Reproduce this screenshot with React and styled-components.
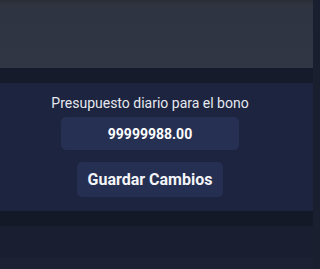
import React, { useState } from "react";
import styled, { createGlobalStyle } from "styled-components";

const GlobalStyle = createGlobalStyle`
  html, body {
    margin: 0;
    padding: 0;
    background-color: #1a1f30;
    font-family: "Roboto", "Liberation Sans", sans-serif;
  }
`;

const App = () => {
  const [presupuesto, setPresupuesto] = useState("99999988.00");

  return (
    <Page>
      <GlobalStyle />
      <Header />
      <Band />
      <Panel>
        <Label htmlFor="presupuesto">Presupuesto diario para el bono</Label>
        <Input
          id="presupuesto"
          value={presupuesto}
          onChange={(e) => setPresupuesto(e.target.value)}
        />
        <SaveButton type="button">Guardar Cambios</SaveButton>
      </Panel>
      <Band $dark />
      <Footer />
      <FooterEdge />
    </Page>
  );
};

const Page = styled.div`
  display: flex;
  flex-direction: column;
  width: 313px;
  height: 269px;
  overflow: hidden;
`;

const Header = styled.div`
  height: 68px;
  background: linear-gradient(180deg, #2a2e36 0px, #2f3441 6px, #303644 100%);
`;

const Band = styled.div`
  height: 15px;
  background-color: ${(props) => (props.$dark ? "#131926" : "#151b2b")};
`;

const Panel = styled.div`
  display: flex;
  flex-direction: column;
  align-items: center;
  height: 128px;
  box-sizing: border-box;
  padding: 12px 13px 14px 0;
  background-color: #1c2440;
`;

const Label = styled.label`
  font-size: 14px;
  line-height: 16px;
  color: #e6e8ef;
  margin-bottom: 6px;
`;

const Input = styled.input`
  width: 178px;
  height: 33px;
  box-sizing: border-box;
  border: none;
  border-radius: 5px;
  background-color: #263052;
  color: #ffffff;
  font-family: "Roboto", "Liberation Sans", sans-serif;
  font-size: 14px;
  font-weight: bold;
  text-align: center;
  outline: none;
  padding: 0;
  margin-bottom: 12px;
`;

const SaveButton = styled.button`
  width: 146px;
  height: 35px;
  border: none;
  border-radius: 5px;
  background-color: #252f52;
  color: #f4f5f8;
  font-family: "Roboto", "Liberation Sans", sans-serif;
  font-size: 16px;
  font-weight: bold;
  cursor: pointer;
  padding: 0;
  &:hover {
    background-color: #2c375e;
  }
`;

const Footer = styled.div`
  height: 31px;
  background-color: #191f30;
`;

const FooterEdge = styled.div`
  flex: 1;
  background-color: #1b2132;
`;

export default App;
